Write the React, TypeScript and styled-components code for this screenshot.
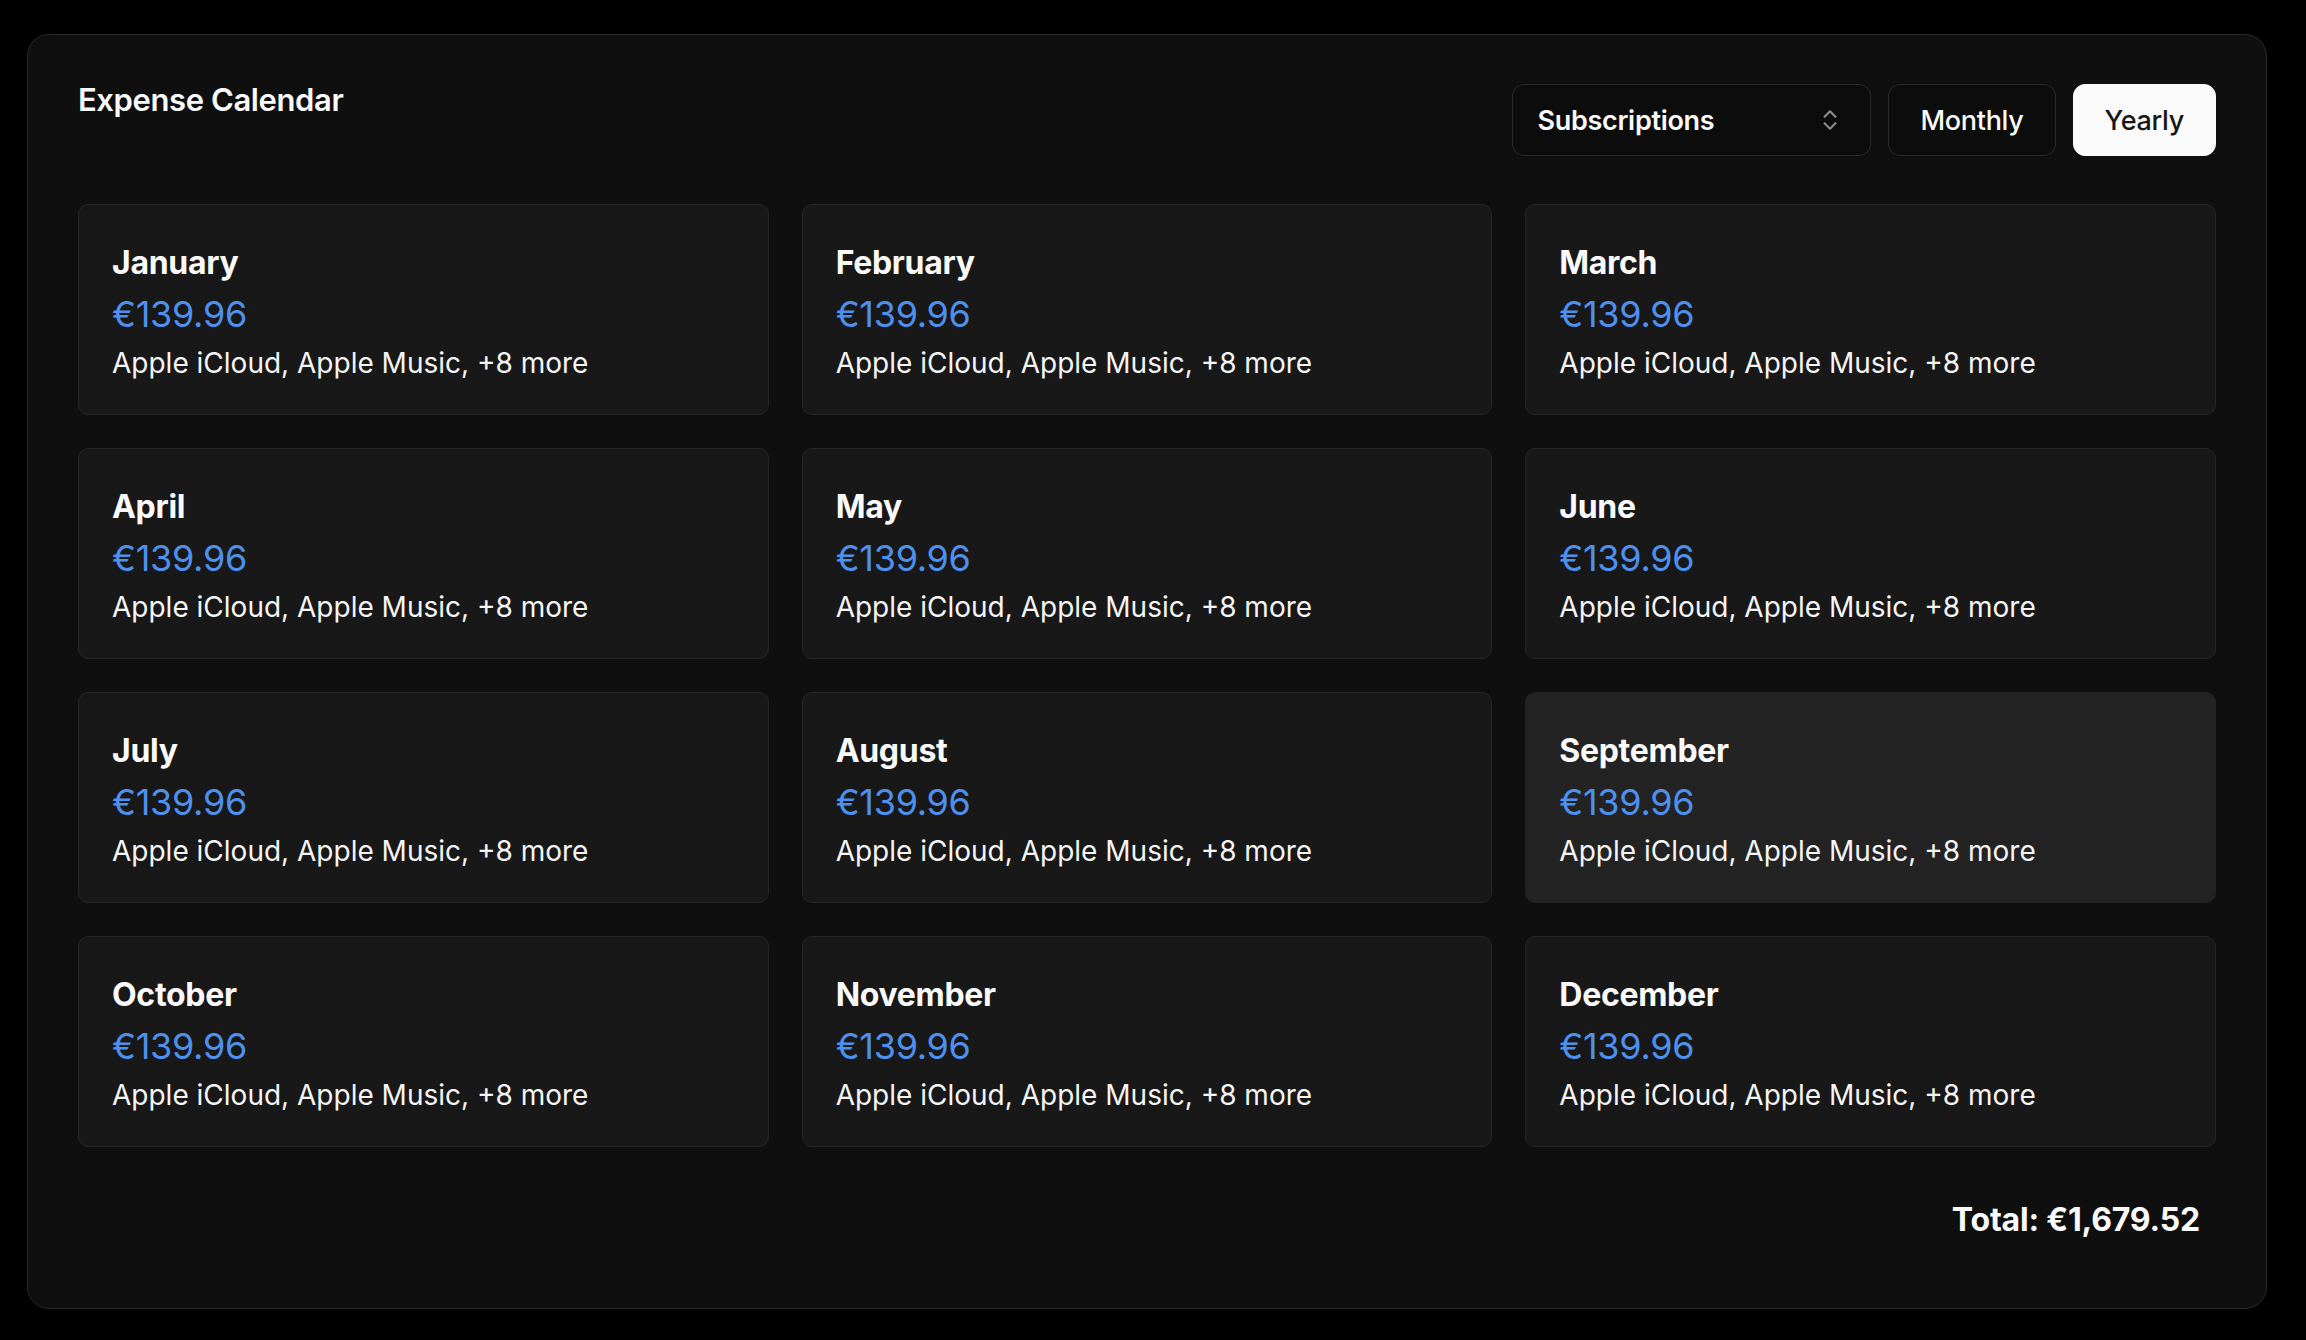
import React from "react";
import styled, { createGlobalStyle } from "styled-components";
import { ChevronsUpDown } from "lucide-react";

const GlobalStyle = createGlobalStyle`
  html, body {
    margin: 0;
    padding: 0;
    background: #000000;
  }
  body {
    font-family: Inter, "Noto Sans", "Liberation Sans", sans-serif;
    color: #fafafa;
    -webkit-font-smoothing: antialiased;
  }
  * { box-sizing: border-box; }
`;

const Page = styled.div`
  padding: 34px 39px 31px 27px;
`;

const Panel = styled.section`
  background: #0f0f0f;
  border: 1px solid #2a2a2a;
  border-radius: 22px;
  padding: 49px 50px 50px;
`;

const Header = styled.header`
  display: flex;
  align-items: flex-start;
  justify-content: space-between;
  height: 72px;
`;

const Title = styled.h1`
  margin: 0;
  font-size: 31px;
  line-height: 32px;
  font-weight: 600;
  letter-spacing: -0.4px;
  color: #fafafa;
`;

const Controls = styled.div`
  display: flex;
  align-items: center;
  gap: 17px;
`;

const Select = styled.div`
  width: 359px;
  height: 72px;
  display: flex;
  align-items: center;
  justify-content: space-between;
  padding: 0 27px 0 24px;
  border: 1px solid #2a2a2a;
  border-radius: 12px;
  background: #0c0c0c;
  font-size: 27px;
  font-weight: 600;
  color: #fafafa;
  letter-spacing: -0.3px;
`;

const ToggleButton = styled.button<{ $active?: boolean }>`
  height: 72px;
  padding: 0 31px;
  border-radius: 12px;
  border: 1px solid ${(p) => (p.$active ? "#fafafa" : "#2a2a2a")};
  background: ${(p) => (p.$active ? "#fafafa" : "#0c0c0c")};
  color: ${(p) => (p.$active ? "#171717" : "#fafafa")};
  font-family: inherit;
  font-size: 27px;
  font-weight: 500;
  letter-spacing: -0.3px;
  cursor: pointer;
`;

const Grid = styled.div`
  margin-top: 48px;
  display: grid;
  grid-template-columns: repeat(3, 1fr);
  gap: 33px;
`;

const MonthCard = styled.div<{ $highlight?: boolean }>`
  height: 211px;
  padding: 34px 33px 29px;
  border-radius: 10px;
  border: 1px solid ${(p) => (p.$highlight ? "#232323" : "#262626")};
  background: ${(p) => (p.$highlight ? "#232323" : "#181818")};
  display: flex;
  flex-direction: column;
`;

const MonthName = styled.div`
  font-size: 32px;
  line-height: 48px;
  font-weight: 700;
  letter-spacing: -0.3px;
  color: #fafafa;
`;

const Amount = styled.div`
  font-size: 36px;
  line-height: 54px;
  font-weight: 400;
  letter-spacing: -0.3px;
  color: #4e90ee;
`;

const Services = styled.div`
  font-size: 28px;
  line-height: 44px;
  font-weight: 400;
  color: #f5f5f5;
  letter-spacing: 0;
`;

const Footer = styled.footer`
  margin-top: 50px;
  padding: 0 16px 16px 0;
  text-align: right;
  font-size: 32px;
  line-height: 45px;
  font-weight: 700;
  letter-spacing: -0.2px;
  color: #fafafa;
`;

const months = [
  "January",
  "February",
  "March",
  "April",
  "May",
  "June",
  "July",
  "August",
  "September",
  "October",
  "November",
  "December",
];

export default function App() {
  return (
    <>
      <GlobalStyle />
      <Page>
        <Panel>
          <Header>
            <Title>Expense Calendar</Title>
            <Controls>
              <Select>
                <span>Subscriptions</span>
                <ChevronsUpDown size={26} color="#8a8a8a" strokeWidth={2} />
              </Select>
              <ToggleButton>Monthly</ToggleButton>
              <ToggleButton $active>Yearly</ToggleButton>
            </Controls>
          </Header>
          <Grid>
            {months.map((m) => (
              <MonthCard key={m} $highlight={m === "September"}>
                <MonthName>{m}</MonthName>
                <Amount>€139.96</Amount>
                <Services>Apple iCloud, Apple Music, +8 more</Services>
              </MonthCard>
            ))}
          </Grid>
          <Footer>Total: €1,679.52</Footer>
        </Panel>
      </Page>
    </>
  );
}
